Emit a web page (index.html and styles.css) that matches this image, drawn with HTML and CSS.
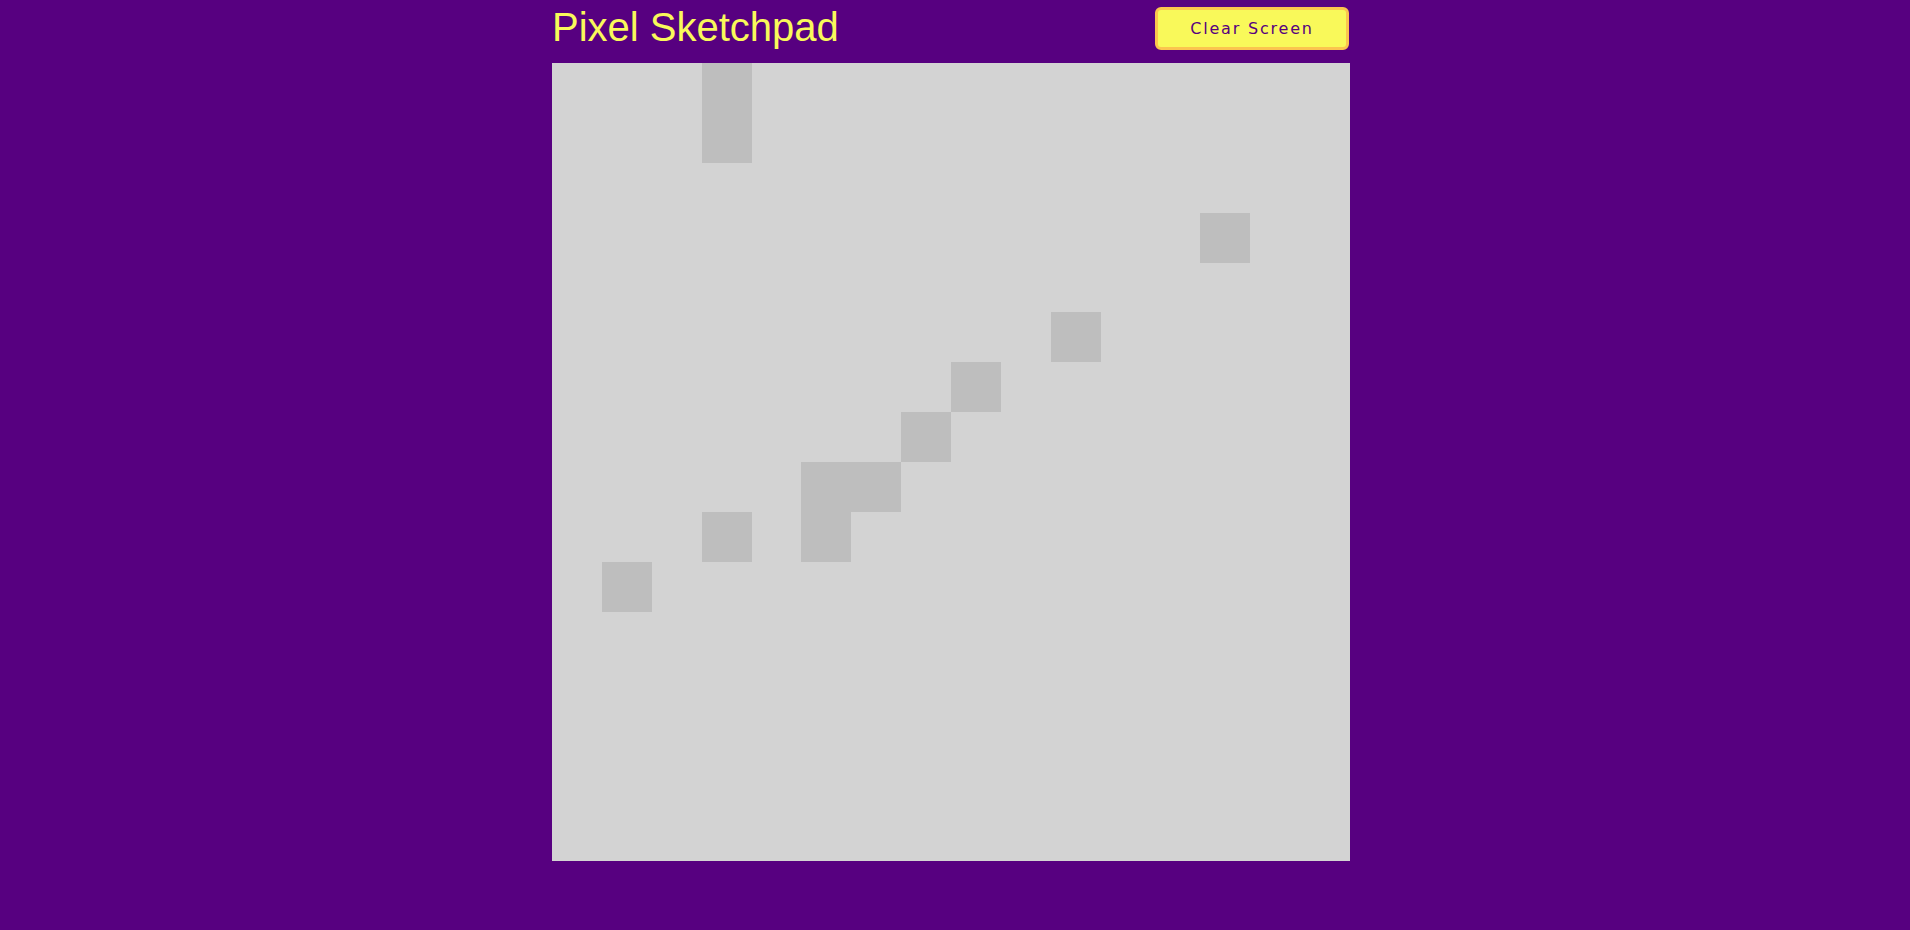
FILE: index.html
```html
<!DOCTYPE html>
<html lang="en">
<head>
<meta charset="utf-8">
<title>Pixel Sketchpad</title>
<link rel="stylesheet" href="styles.css">
</head>
<body>
<main class="app">
  <header class="top">
    <h1 class="title">Pixel Sketchpad</h1>
    <button class="clear">Clear Screen</button>
  </header>
  <section class="pad">
    <div></div><div></div><div></div><div class="on"></div><div></div><div></div><div></div><div></div><div></div><div></div><div></div><div></div><div></div><div></div><div></div><div></div>
    <div></div><div></div><div></div><div class="on"></div><div></div><div></div><div></div><div></div><div></div><div></div><div></div><div></div><div></div><div></div><div></div><div></div>
    <div></div><div></div><div></div><div></div><div></div><div></div><div></div><div></div><div></div><div></div><div></div><div></div><div></div><div></div><div></div><div></div>
    <div></div><div></div><div></div><div></div><div></div><div></div><div></div><div></div><div></div><div></div><div></div><div></div><div></div><div class="on"></div><div></div><div></div>
    <div></div><div></div><div></div><div></div><div></div><div></div><div></div><div></div><div></div><div></div><div></div><div></div><div></div><div></div><div></div><div></div>
    <div></div><div></div><div></div><div></div><div></div><div></div><div></div><div></div><div></div><div></div><div class="on"></div><div></div><div></div><div></div><div></div><div></div>
    <div></div><div></div><div></div><div></div><div></div><div></div><div></div><div></div><div class="on"></div><div></div><div></div><div></div><div></div><div></div><div></div><div></div>
    <div></div><div></div><div></div><div></div><div></div><div></div><div></div><div class="on"></div><div></div><div></div><div></div><div></div><div></div><div></div><div></div><div></div>
    <div></div><div></div><div></div><div></div><div></div><div class="on"></div><div class="on"></div><div></div><div></div><div></div><div></div><div></div><div></div><div></div><div></div><div></div>
    <div></div><div></div><div></div><div class="on"></div><div></div><div class="on"></div><div></div><div></div><div></div><div></div><div></div><div></div><div></div><div></div><div></div><div></div>
    <div></div><div class="on"></div><div></div><div></div><div></div><div></div><div></div><div></div><div></div><div></div><div></div><div></div><div></div><div></div><div></div><div></div>
    <div></div><div></div><div></div><div></div><div></div><div></div><div></div><div></div><div></div><div></div><div></div><div></div><div></div><div></div><div></div><div></div>
    <div></div><div></div><div></div><div></div><div></div><div></div><div></div><div></div><div></div><div></div><div></div><div></div><div></div><div></div><div></div><div></div>
    <div></div><div></div><div></div><div></div><div></div><div></div><div></div><div></div><div></div><div></div><div></div><div></div><div></div><div></div><div></div><div></div>
    <div></div><div></div><div></div><div></div><div></div><div></div><div></div><div></div><div></div><div></div><div></div><div></div><div></div><div></div><div></div><div></div>
    <div></div><div></div><div></div><div></div><div></div><div></div><div></div><div></div><div></div><div></div><div></div><div></div><div></div><div></div><div></div><div></div>
  </section>
</main>
</body>
</html>
```

FILE: styles.css
```css
html, body {
  background: #570080;
}

body {
  margin: 0 8px 0 0;
  font-family: "Liberation Sans", Arial, sans-serif;
}

.app {
  width: 798px;
  margin: 0 auto;
}

.top {
  display: flex;
  justify-content: space-between;
  align-items: flex-start;
  padding-top: 7px;
  margin-bottom: 13px;
}

.title {
  margin: 0;
  font-family: "Liberation Sans", Arial, sans-serif;
  font-weight: normal;
  font-size: 40px;
  line-height: 40px;
  color: #f9f95a;
}

.clear {
  width: 194px;
  height: 43px;
  margin-right: 1px;
  padding: 0;
  background: #f9f95a;
  border: 3px solid #fbc54e;
  border-radius: 6px;
  color: #570080;
  font-family: "DejaVu Sans", Verdana, sans-serif;
  font-size: 16px;
  letter-spacing: 1.8px;
  cursor: pointer;
}

.pad {
  display: grid;
  grid-template-columns: repeat(16, 1fr);
  grid-template-rows: repeat(16, 1fr);
  width: 798px;
  height: 798px;
  background: #d3d3d3;
}

.pad > div {
  background: #d3d3d3;
}

.pad > .on {
  background: #bebebe;
}
```
